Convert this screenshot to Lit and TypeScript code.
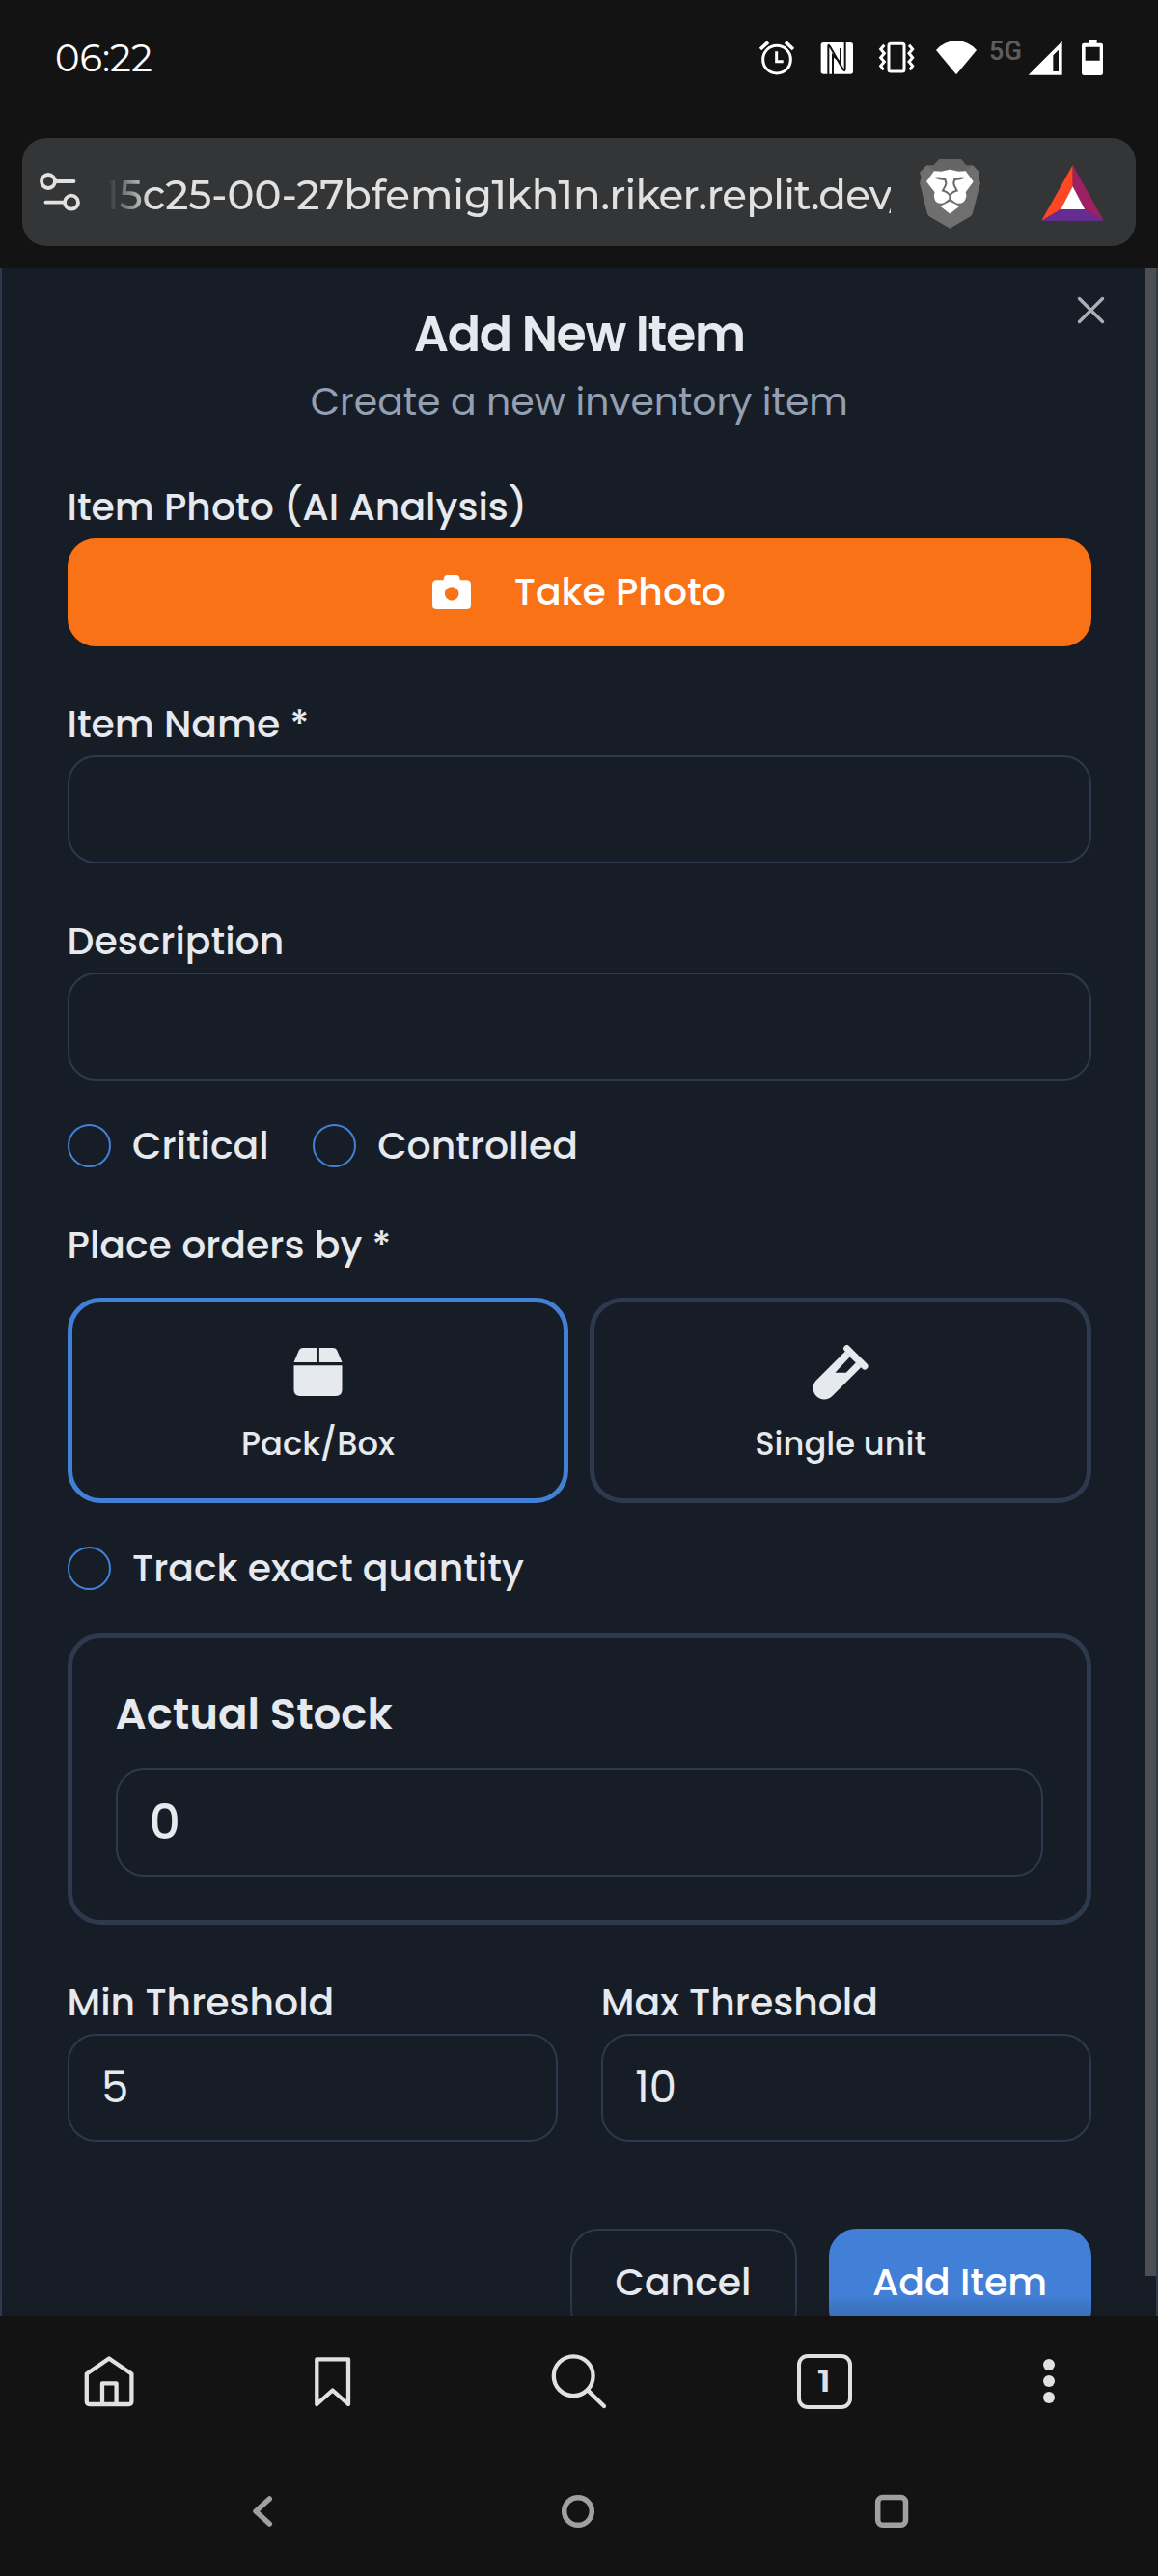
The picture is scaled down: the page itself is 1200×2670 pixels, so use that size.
import { LitElement, html, css, svg } from "lit";
import { customElement, property, state } from "lit/decorators.js";
import { classMap } from "lit/directives/class-map.js";

/** Android status bar: clock and system indicators. */
@customElement("status-bar")
class StatusBar extends LitElement {
  static styles = css`
    :host {
      display: flex;
      align-items: center;
      height: 120px;
      padding: 0 57px;
      box-sizing: border-box;
      color: #fff;
      font-family: Montserrat, Inter, sans-serif;
    }
    .clock {
      flex: 1;
      font-size: 38.5px;
      line-height: 48px;
      font-weight: 450;
      padding-top: 2px;
    }
    svg {
      display: block;
      height: 38px;
    }
    .alarm { width: 36px; }
    .nfc { width: 35px; margin-left: 27px; }
    .vibrate { width: 38px; margin-left: 25px; }
    .wifi { width: 42px; margin-left: 22px; }
    .network {
      align-self: flex-start;
      width: 34px;
      margin: 38px 0 0 13px;
      font: 600 27px/30px Roboto, sans-serif;
      color: #5c5c5c;
      white-space: nowrap;
    }
    .signal { width: 36px; margin-left: 6px; }
    .battery { width: 22px; margin-left: 20px; }
  `;

  render() {
    return html`
      <span class="clock">06:22</span>
      <svg class="alarm" viewBox="36 33 108 114" fill="none" stroke="#fff">
        <circle cx="90" cy="95" r="43" stroke-width="9" />
        <path d="M89 70V101H110" stroke-width="9" />
        <path d="M39 63L63 41M117 41L141 63" stroke-width="11" />
      </svg>
      <svg class="nfc" viewBox="225 33 105 114">
        <rect x="227" y="42" width="100" height="98" rx="8" fill="#fff" />
        <path
          d="M250 141V54Q250 46 256 56L296 126Q302 134 302 124V41M264 141V82L288 104V60"
          fill="none"
          stroke="#131313"
          stroke-width="6"
        />
      </svg>
      <svg class="vibrate" viewBox="405 33 114 114" fill="none" stroke="#fff" stroke-width="9">
        <rect x="438" y="46" width="48" height="86" rx="6" />
        <path
          d="M424 50L413 63L424 76L413 89L424 102L413 115L422 127M501 50L512 63L501 76L512 89L501 102L512 115L503 127"
        />
      </svg>
      <svg class="wifi" viewBox="90 33 126 114">
        <path d="M90 66Q116 37 153 37T216 66L153 142Z" fill="#fff" />
      </svg>
      <span class="network">5G</span>
      <svg class="signal" viewBox="375 33 108 114">
        <path d="M377 143L482 38V143ZM454 82V132H471V65Z" fill="#fff" fill-rule="evenodd" />
      </svg>
      <svg class="battery" viewBox="543 33 66 114">
        <path
          d="M564 33H590V44H602Q609 44 609 51V137Q609 144 602 144H550Q543 144 543 137V51Q543 44 550 44H564ZM554 56V98H599V56Z"
          fill="#fff"
          fill-rule="evenodd"
        />
      </svg>
    `;
  }
}

/** Browser address bar with the shields and rewards buttons. */
@customElement("address-bar")
class AddressBar extends LitElement {
  static styles = css`
    :host {
      display: flex;
      align-items: center;
      height: 112px;
      margin: 23px 23px 23px;
      padding-left: 18px;
      box-sizing: border-box;
      border-radius: 25px;
      background: #343537;
    }
    svg {
      display: block;
      flex: none;
    }
    .tune { width: 42px; height: 40px; }
    .url {
      width: 811px;
      margin-left: 29px;
      padding-top: 5px;
      overflow: hidden;
      white-space: nowrap;
      font: 500 42px/56px Montserrat, Inter, sans-serif;
      color: #e1e1e1;
      -webkit-mask-image: linear-gradient(90deg, transparent, #000 44px);
      mask-image: linear-gradient(90deg, transparent, #000 44px);
    }
    .sub {
      margin-left: -4px;
      letter-spacing: -0.06px;
    }
    .domain {
      letter-spacing: -0.75px;
    }
    .shield { width: 63px; height: 72px; margin: 3px 0 0 30px; }
    .rewards { width: 65px; height: 58px; margin: 2px 0 0 63px; }
  `;

  render() {
    return html`
      <svg class="tune" viewBox="41 179 42 40" fill="none" stroke="#e1e1e1" stroke-width="3.8">
        <circle cx="50" cy="188" r="7" />
        <path d="M58 188H76.5M47.5 209.7H65" stroke-linecap="round" />
        <circle cx="74" cy="209.7" r="7" />
      </svg>
      <div class="url"><span class="sub">15c25-00-27bfemig1kh1n</span><span class="domain">.riker.replit.dev/</span></div>
      <svg class="shield" viewBox="39 404 189 215">
        <path
          d="M100 404H168L184 423H205L226 445L222 460L228 478L204 570Q202 578 196 582L133 619L70 582Q64 578 62 570L39 478L44 460L39 445L60 423H82Z"
          fill="#6f6f6f"
        />
        <path d="M100 404H168L184 423H205L180 440L133 434L88 440L60 423H82Z" fill="#656565" />
        <path
          d="M84 440L106 442L133 436L160 442L182 440L206 473L182 506Q188 520 176 536Q162 545 150 538L133 525L116 538Q104 545 90 536Q80 520 86 506L60 473Z"
          fill="#fff"
        />
        <path d="M103 550L133 535L163 550L133 573Z" fill="#fff" />
        <g fill="#6b6b6b">
          <path d="M82 461Q100 456 122 464L118 470Q100 468 82 461Z" />
          <path d="M184 461Q166 456 144 464L148 470Q166 468 184 461Z" />
        </g>
        <path
          d="M118 467Q124 478 118 488L111 501Q124 504 133 515Q142 504 155 501L148 488Q142 478 148 467M133 513V527"
          fill="none"
          stroke="#6b6b6b"
          stroke-width="6"
        />
      </svg>
      <svg class="rewards" viewBox="417 423 194 174">
        <path d="M514.5 423V490L477 561L417 597Z" fill="#ff4724" />
        <path d="M514.5 423L611 597L552 561L514.5 490Z" fill="#9e1f63" />
        <path d="M417 597L477 561H552L611 597Z" fill="#662d91" />
        <path d="M514.5 490L552 561H477Z" fill="#fff" />
      </svg>
    `;
  }
}

/** Labelled text input. */
@customElement("form-field")
class FormField extends LitElement {
  @property() label = "";
  @property() value = "";

  static styles = css`
    :host {
      display: block;
    }
    .label {
      height: 56px;
      font-size: 39.375px;
      line-height: 58px;
      font-weight: 500;
      white-space: nowrap;
    }
    .box {
      display: flex;
      align-items: center;
      height: 112px;
      margin-top: 5px;
      padding-left: 33.5px;
      box-sizing: border-box;
      border: 2px solid #2d394c;
      border-radius: 29px;
      font-size: 45px;
    }
  `;

  render() {
    return html`
      <div class="label">${this.label}</div>
      <div class="box">${this.value}</div>
    `;
  }
}

/** Round toggle with its caption. */
@customElement("round-check")
class RoundCheck extends LitElement {
  @property() label = "";

  static styles = css`
    :host {
      display: flex;
      align-items: center;
      gap: 22.5px;
      height: 45px;
      font-size: 39.375px;
      line-height: 45px;
      font-weight: 500;
      white-space: nowrap;
    }
    .ring {
      width: 45px;
      height: 45px;
      box-sizing: border-box;
      border: 2px solid #4280d8;
      border-radius: 50%;
    }
  `;

  render() {
    return html`<span class="ring"></span><span>${this.label}</span>`;
  }
}

const boxIcon = svg`
  <path d="M0 15L5 3.2Q6.4 0 9.5 0H23.6V15Z" />
  <path d="M26.4 0H40.5Q43.6 0 45 3.2L50 15H26.4Z" />
  <path d="M0 18.2H50V43.6Q50 50 43.6 50H6.4Q0 50 0 43.6Z" />
`;

const tubeIcon = svg`
  <path fill-rule="evenodd" d="M34 6.5L4 36.5A11.6 11.6 0 0 0 20.4 53L50.5 23ZM38.6 12.6L44.8 18.6L34.7 28.7H23.4Z" />
  <path d="M35.6 3.6L54 22" stroke="currentColor" stroke-width="7" stroke-linecap="round" />
`;

/** The "Add New Item" dialog filling the browser viewport. */
@customElement("item-dialog")
class ItemDialog extends LitElement {
  @state() private orderBy = "pack";

  static styles = css`
    :host {
      display: block;
      position: relative;
      height: 2122px;
      box-sizing: border-box;
      overflow: hidden;
      padding: 43px 67px 0 67.5px;
      border: 0 solid #2d394c;
      border-width: 0 2px;
      background: #171d26;
      color: #e6e9ee;
      font-family: Poppins, Montserrat, sans-serif;
    }
    .scrollbar {
      position: absolute;
      top: 0;
      right: 0;
      width: 11px;
      height: 2081px;
      background: #4c4e52;
    }
    .shade {
      position: absolute;
      left: 0;
      right: 0;
      bottom: 0;
      height: 22px;
      background: linear-gradient(transparent, rgba(19, 19, 19, 0.16));
    }
    .close {
      position: absolute;
      top: 29px;
      right: 53px;
      width: 29px;
      height: 29px;
    }
    header {
      text-align: center;
    }
    h1 {
      margin: 0;
      padding-top: 1px;
      font-size: 50.625px;
      line-height: 50px;
      font-weight: 600;
      letter-spacing: -1.26px;
    }
    .subtitle {
      margin: 17px 0 0;
      font-size: 39.375px;
      line-height: 56px;
      color: #94a0b2;
    }
    .label {
      height: 56px;
      font-size: 39.375px;
      line-height: 58px;
      font-weight: 500;
    }
    .photo-label {
      margin-top: 52px;
    }
    .photo {
      display: flex;
      align-items: center;
      justify-content: center;
      gap: 45px;
      height: 112px;
      margin-top: 5px;
      padding: 0 1px 2px 0;
      box-sizing: border-box;
      border-radius: 29px;
      background: #f97316;
      color: #fff;
      font-size: 39.375px;
      font-weight: 500;
    }
    .photo svg {
      width: 40px;
      height: 35px;
    }
    .field {
      margin-top: 52px;
    }
    .checks {
      display: flex;
      gap: 45px;
      margin-top: 45px;
    }
    .order-label {
      margin-top: 52px;
    }
    .cards {
      display: grid;
      grid-template-columns: 1fr 1fr;
      gap: 22px;
      margin-top: 27px;
    }
    .card {
      display: flex;
      flex-direction: column;
      align-items: center;
      height: 213px;
      padding-top: 44px;
      box-sizing: border-box;
      border: 5px solid #2d394c;
      border-radius: 34px;
      font-size: 33.75px;
      line-height: 45px;
      font-weight: 500;
    }
    .card.selected {
      border-color: #4280d8;
    }
    .card .icon {
      display: grid;
      place-items: center;
      height: 56px;
      margin-bottom: 24px;
    }
    .card svg {
      display: block;
      fill: currentColor;
    }
    .track {
      margin-top: 45px;
    }
    .stock {
      margin-top: 45px;
      padding: 45px;
      border: 5px solid #2d394c;
      border-radius: 34px;
    }
    h2 {
      margin: 0;
      font-size: 45px;
      line-height: 67px;
      font-weight: 600;
    }
    .stock-value {
      display: flex;
      align-items: center;
      height: 112px;
      margin-top: 23px;
      padding-left: 33px;
      box-sizing: border-box;
      border: 2px solid #2d394c;
      border-radius: 29px;
      font-size: 50.625px;
      font-weight: 500;
    }
    .thresholds {
      display: grid;
      grid-template-columns: 1fr 1fr;
      gap: 45px;
      margin-top: 52px;
    }
    .actions {
      display: flex;
      justify-content: flex-end;
      gap: 33px;
      margin-top: 90px;
    }
    .button {
      display: flex;
      align-items: center;
      justify-content: center;
      width: 235px;
      height: 112px;
      padding: 0 1px 2px 0;
      box-sizing: border-box;
      border: 2px solid #2d394c;
      border-radius: 29px;
      font-size: 39.375px;
      font-weight: 500;
    }
    .button.primary {
      width: 272px;
      border-color: #4280d8;
      background: #4280d8;
      color: #fff;
    }
  `;

  private card(id: string, label: string, icon: unknown) {
    return html`
      <div
        class=${classMap({ card: true, selected: this.orderBy === id })}
        @click=${() => (this.orderBy = id)}
      >
        <div class="icon">${icon}</div>
        ${label}
      </div>
    `;
  }

  render() {
    return html`
      <header>
        <h1>Add New Item</h1>
        <p class="subtitle">Create a new inventory item</p>
      </header>

      <div class="label photo-label">Item Photo (AI Analysis)</div>
      <div class="photo">
        <svg viewBox="53 47 121 106">
          <path
            fill="#fff"
            fill-rule="evenodd"
            d="M67 63H88Q89 47 100 47H128Q139 47 140 63H160Q174 63 174 77V139Q174 153 160 153H67Q53 153 53 139V77Q53 63 67 63ZM114 84A22 22 0 1 0 114 128A22 22 0 1 0 114 84Z"
          />
        </svg>
        Take Photo
      </div>

      <form-field class="field" label="Item Name *"></form-field>
      <form-field class="field" label="Description"></form-field>

      <div class="checks">
        <round-check label="Critical"></round-check>
        <round-check label="Controlled"></round-check>
      </div>

      <div class="label order-label">Place orders by *</div>
      <div class="cards">
        ${this.card("pack", "Pack/Box", html`<svg width="51" height="50" viewBox="0 0 50 50">${boxIcon}</svg>`)}
        ${this.card("unit", "Single unit", html`<svg width="58" height="57" viewBox="0 0 58 57">${tubeIcon}</svg>`)}
      </div>

      <round-check class="track" label="Track exact quantity"></round-check>

      <section class="stock">
        <h2>Actual Stock</h2>
        <div class="stock-value">0</div>
      </section>

      <div class="thresholds">
        <form-field label="Min Threshold" value="5"></form-field>
        <form-field label="Max Threshold" value="10"></form-field>
      </div>

      <div class="actions">
        <div class="button">Cancel</div>
        <div class="button primary">Add Item</div>
      </div>

      <svg class="close" viewBox="0 0 29 29" stroke="#acb0b6" stroke-width="3.4" stroke-linecap="round">
        <path d="M2.5 2.5L26.5 26.5M26.5 2.5L2.5 26.5" />
      </svg>
      <div class="shade"></div>
      <div class="scrollbar"></div>
    `;
  }
}

/** Browser toolbar and the system navigation row below it. */
@customElement("bottom-bars")
class BottomBars extends LitElement {
  static styles = css`
    .toolbar,
    .system {
      display: grid;
      place-items: center;
    }
    .toolbar {
      grid-template-columns: 226px 238px 272px 236px 228px;
      height: 136px;
    }
    .system {
      grid-template-columns: 543px 112px 538px;
      height: 134px;
    }
    svg {
      display: block;
      width: 60px;
      height: 60px;
      fill: none;
      stroke: #e1e1e1;
      stroke-width: 4.3;
      stroke-linecap: round;
      stroke-linejoin: round;
    }
    .system svg {
      stroke: #a0a0a0;
      stroke-width: 5.5;
    }
    .toolbar .dots {
      fill: #e1e1e1;
      stroke: none;
    }
    .tabs {
      display: grid;
      place-items: center;
      width: 57px;
      height: 57px;
      box-sizing: border-box;
      border: 4px solid #e1e1e1;
      border-radius: 11px;
      color: #e1e1e1;
      font: 700 32px/40px Montserrat, Inter, sans-serif;
    }
  `;

  render() {
    return html`
      <div class="toolbar">
        <svg viewBox="0 0 60 60">
          <path d="M30 6.5L6.8 22.5V51Q6.8 54 9.8 54H50.4Q53.4 54 53.4 51V22.5ZM23 53V32.4H37.6V53" />
        </svg>
        <svg viewBox="0 0 60 60"><path d="M13.3 54V7.3H46V54L29.6 39.5Z" /></svg>
        <svg viewBox="0 0 60 60">
          <circle cx="24.2" cy="24.7" r="20.4" />
          <path d="M39.2 39.6L56 56" />
        </svg>
        <div class="tabs">1</div>
        <svg class="dots" viewBox="0 0 60 60">
          <circle cx="31" cy="13" r="6" />
          <circle cx="31" cy="30" r="6" />
          <circle cx="31" cy="47" r="6" />
        </svg>
      </div>
      <div class="system">
        <svg viewBox="0 0 60 60"><path d="M37.3 17L23 30L37.3 43" /></svg>
        <svg viewBox="0 0 60 60"><circle cx="30" cy="30" r="14.3" /></svg>
        <svg viewBox="0 0 60 60"><rect x="15.7" y="15.5" width="28.8" height="28.8" rx="5" /></svg>
      </div>
    `;
  }
}

@customElement("app-root")
class AppRoot extends LitElement {
  static styles = css`
    :host {
      display: flex;
      flex-direction: column;
      width: 1200px;
      height: 2670px;
      overflow: hidden;
      background: #131313;
    }
  `;

  render() {
    return html`
      <status-bar></status-bar>
      <address-bar></address-bar>
      <item-dialog></item-dialog>
      <bottom-bars></bottom-bars>
    `;
  }
}
